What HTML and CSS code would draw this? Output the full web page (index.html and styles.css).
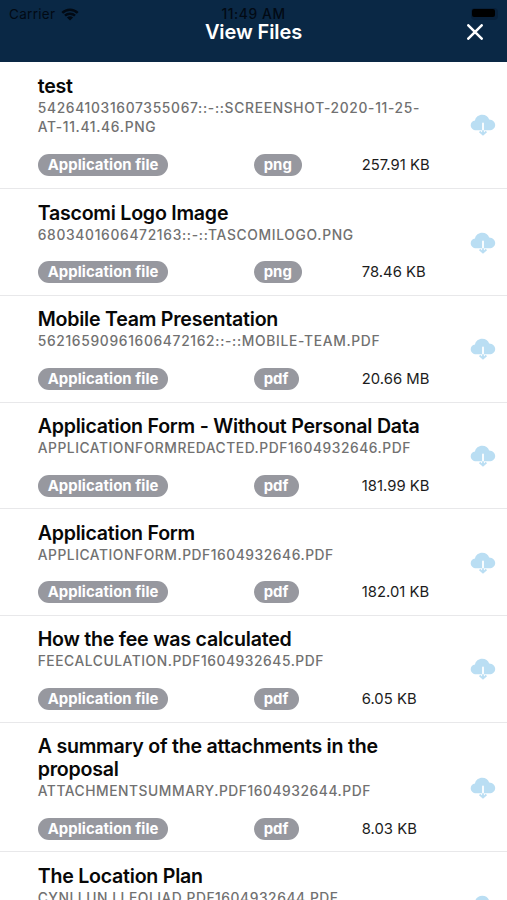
FILE: index.html
```
<!DOCTYPE html>
<html lang="en">
<head>
<meta charset="utf-8">
<title>View Files</title>
<link rel="stylesheet" href="styles.css">
</head>
<body>
<svg class="defs" width="0" height="0" aria-hidden="true">
  <symbol id="cloud" viewBox="0 0 26 22">
    <path class="cloud-shape" d="M6.3 16.3C3 16.3.7 14.200.7 11.300.7 8.700 2.500 6.800 5 6.400 5.600 3.100 8.600.8 12.300.8c3.200 0 5.900 1.800 6.900 4.700 3.400.2 6 2.500 6 5.500 0 3.100-2.500 5.300-5.900 5.300z"/>
    <path class="cloud-cut" d="M13 9.500v7"/>
    <path class="cloud-arrow" d="M13 16.300v4.200M9.600 17.500l3.400 3.100 3.400-3.100"/>
  </symbol>
</svg>
<header class="header">
  <div class="status">
    <div class="carrier"><span>Carrier</span>
      <svg class="wifi" viewBox="0 0 18 13"><path d="M1.300 4.800a11 11 0 0 1 15.400 0M4 7.700a7.200 7.200 0 0 1 10 0"/><path class="dot" d="M9 12.600 5.900 9.500a4.400 4.400 0 0 1 6.200 0z"/></svg>
    </div>
    <div class="time">11:49 AM</div>
    <div class="battery"><i></i></div>
  </div>
  <div class="nav">
    <h1>View Files</h1>
    <svg class="close" viewBox="0 0 16 16"><path d="M1.300 1.300l13.400 13.400M14.700 1.300 1.300 14.700"/></svg>
  </div>
</header>
<main class="files">
  <article class="file"><div class="info"><h2>test</h2><p class="numbered">542641031607355067::-::SCREENSHOT-2020-11-25-<br>AT-11.41.46.PNG</p><div class="meta"><span class="pill">Application file</span><span class="pill">png</span><span class="size">257.91 KB</span></div></div><svg class="cloud"><use href="#cloud"/></svg></article>
  <article class="file"><div class="info"><h2>Tascomi Logo Image</h2><p class="numbered">6803401606472163::-::TASCOMILOGO.PNG</p><div class="meta"><span class="pill">Application file</span><span class="pill">png</span><span class="size">78.46 KB</span></div></div><svg class="cloud"><use href="#cloud"/></svg></article>
  <article class="file"><div class="info"><h2>Mobile Team Presentation</h2><p class="numbered">56216590961606472162::-::MOBILE-TEAM.PDF</p><div class="meta"><span class="pill">Application file</span><span class="pill">pdf</span><span class="size">20.66 MB</span></div></div><svg class="cloud"><use href="#cloud"/></svg></article>
  <article class="file"><div class="info"><h2>Application Form - Without Personal Data</h2><p>APPLICATIONFORMREDACTED.PDF1604932646.PDF</p><div class="meta"><span class="pill">Application file</span><span class="pill">pdf</span><span class="size">181.99 KB</span></div></div><svg class="cloud"><use href="#cloud"/></svg></article>
  <article class="file"><div class="info"><h2>Application Form</h2><p>APPLICATIONFORM.PDF1604932646.PDF</p><div class="meta"><span class="pill">Application file</span><span class="pill">pdf</span><span class="size">182.01 KB</span></div></div><svg class="cloud"><use href="#cloud"/></svg></article>
  <article class="file"><div class="info"><h2>How the fee was calculated</h2><p>FEECALCULATION.PDF1604932645.PDF</p><div class="meta"><span class="pill">Application file</span><span class="pill">pdf</span><span class="size">6.05 KB</span></div></div><svg class="cloud"><use href="#cloud"/></svg></article>
  <article class="file"><div class="info"><h2>A summary of the attachments in the<br>proposal</h2><p>ATTACHMENTSUMMARY.PDF1604932644.PDF</p><div class="meta"><span class="pill">Application file</span><span class="pill">pdf</span><span class="size">8.03 KB</span></div></div><svg class="cloud"><use href="#cloud"/></svg></article>
  <article class="file"><div class="info"><h2>The Location Plan</h2><p>CYNLLUN LLEOLIAD.PDF1604932644.PDF</p></div><svg class="cloud"><use href="#cloud"/></svg></article>
</main>
</body>
</html>
```
FILE: styles.css
```
* { box-sizing: border-box; }
body {
  margin: 0;
  height: 900px;
  overflow: hidden;
  display: flex;
  flex-direction: column;
  background: #fff;
  color: #080808;
  font-family: Inter, "Liberation Sans", sans-serif;
}
h1, h2, p { margin: 0; }
.defs { position: absolute; }
.header { flex: none; height: 62.4px; background: #0a2845; }
.status {
  display: grid;
  grid-template-columns: 1fr auto 1fr;
  align-items: center;
  height: 22px;
  padding: 6px 9px 0 9px;
  color: #020a14;
  font-size: 13.5px;
  line-height: 16px;
}
.carrier { display: flex; align-items: center; gap: 6px; letter-spacing: 0.3px; }
.wifi { width: 18px; height: 13px; fill: none; stroke: #020a14; stroke-width: 2.5; }
.wifi .dot { fill: #020a14; stroke: none; }
.time { font-weight: 500; font-size: 13.8px; letter-spacing: 0.6px; }
.battery { justify-self: end; width: 27px; height: 12px; padding: 1px 3px 2px 1px; border-radius: 4px; background: #08203a; }
.battery i { display: block; height: 8px; border-radius: 2px; background: #000; }
.nav {
  display: grid;
  grid-template-columns: 1fr auto 1fr;
  align-items: center;
  height: 20px;
  padding: 0 24px;
  color: #fff;
}
.nav h1 { grid-column: 2; font-size: 20px; line-height: 20px; font-weight: 600; letter-spacing: -0.1px; }
.close { justify-self: end; width: 16px; height: 16px; fill: none; stroke: #fff; stroke-width: 2.5; stroke-linecap: round; }
.files { flex: 1; min-height: 0; overflow: hidden; }
.file {
  display: flex;
  align-items: center;
  padding: 12.6px 11.4px 11.4px 37.7px;
  border-bottom: 1px solid #e8e8ea;
}
.file:first-child { padding-bottom: 12px; }
.file:first-child p { line-height: 19.6px; }
.file:first-child .cloud { margin-bottom: 1px; }
.file:last-child { height: 106.65px; align-items: flex-start; }
.file:last-child .cloud { margin-top: 29.6px; }
.info { flex: 1; min-width: 0; }
h2 { font-size: 19.6px; line-height: 23.3px; font-weight: 600; letter-spacing: -0.24px; white-space: nowrap; }
p { padding-top: 0.5px; color: #717171; font-size: 13.8px; line-height: 19.7px; font-weight: 450; letter-spacing: 0.55px; white-space: nowrap; }
.numbered { letter-spacing: 0.68px; }
.meta {
  display: grid;
  grid-template-columns: 216px 108px auto;
  align-items: center;
  justify-items: start;
  margin-top: 16.2px;
  height: 22px;
}
.pill {
  height: 22px;
  padding: 0 10px;
  border-radius: 11px;
  background: #97989f;
  color: #fff;
  font-size: 14.9px;
  line-height: 22px;
  font-weight: 700;
  letter-spacing: 0.05px;
}
.size { font-size: 14.8px; line-height: 22px; color: #1c1c1c; letter-spacing: 0.04px; white-space: nowrap; }
.cloud { flex: none; width: 26px; height: 22px; }
.cloud-shape { fill: #badef3; }
.cloud-cut { fill: none; stroke: #fff; stroke-width: 1.8; stroke-linecap: round; }
.cloud-arrow { fill: none; stroke: #badef3; stroke-width: 1.8; }
```
